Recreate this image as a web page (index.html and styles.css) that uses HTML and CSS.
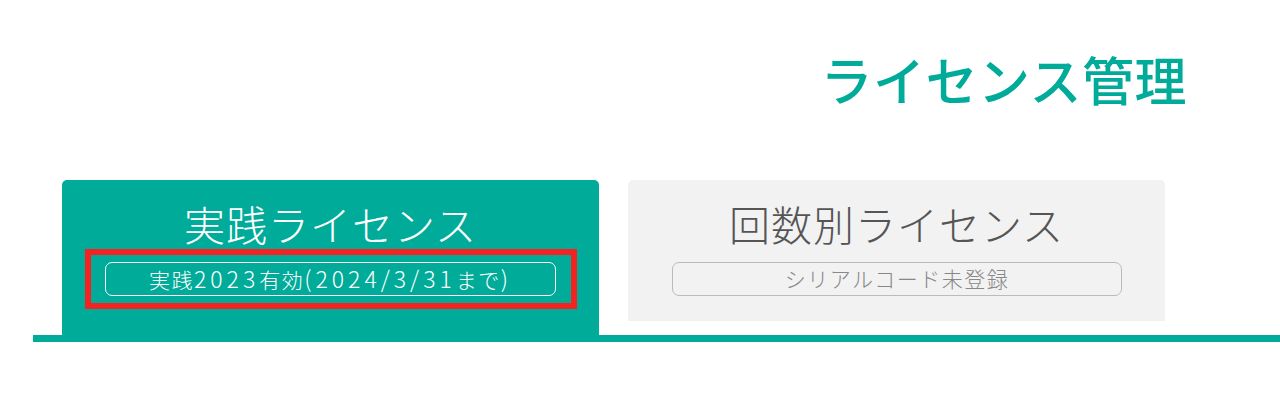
FILE: index.html
```html
<!DOCTYPE html>
<html lang="ja">
<head>
    <meta charset="utf-8">
    <title>ライセンス管理</title>
    <link rel="stylesheet" href="styles.css">
</head>
<body>
    <div class="page">
        <h1 class="page-title">ライセンス管理</h1>
        <div class="tabs">
            <div class="tab tab-active">
                <div class="tab-name">実践ライセンス</div>
                <div class="mark">
                    <div class="status">実践<span class="num">2023</span>有効<span class="num">(2024/3/31</span>まで<span class="num">)</span></div>
                </div>
            </div>
            <div class="tab">
                <div class="tab-name">回数別ライセンス</div>
                <div class="mark-none">
                    <div class="status">シリアルコード未登録</div>
                </div>
            </div>
        </div>
    </div>
</body>
</html>
```

FILE: styles.css
```css
body {
    margin: 0;
    background: #fff;
    font-family: "Noto Sans CJK JP", "Noto Sans", sans-serif;
}
.page {
    padding-left: 33px;
    overflow: hidden;
}
.page-title {
    margin: 0;
    padding: 44px 93px 0 0;
    text-align: right;
    font-size: 52px;
    font-weight: 500;
    line-height: 70px;
    color: #00ab99;
    letter-spacing: 0.5px;
}
.tabs {
    display: flex;
    align-items: flex-start;
    gap: 29px;
    margin-top: 66px;
    padding-left: 29px;
    border-bottom: 7px solid #00ab99;
}
.tab {
    width: 537px;
    height: 141px;
    box-sizing: border-box;
    padding: 18px 0 0;
    background: #f2f2f2;
    border-radius: 5px 5px 0 0;
    color: #555;
    text-align: center;
}
.tab-active {
    height: 155px;
    background: #00ab99;
    color: #fff;
}
.tab-name {
    font-size: 41px;
    font-weight: 300;
    line-height: 50px;
    letter-spacing: 1px;
}
.mark {
    margin: 1px 22px 0 23px;
    padding: 7px 15px 7px 14px;
    border: 6px solid #f52222;
}
.mark-none {
    margin: 14px 43px 0 44px;
}
.status {
    height: 34px;
    box-sizing: border-box;
    border: 1px solid #fff;
    border-radius: 7px;
    font-size: 21px;
    font-weight: 300;
    line-height: 31px;
    letter-spacing: 1.5px;
}
.status .num {
    font-size: 23px;
    letter-spacing: 4px;
}
.mark-none .status {
    border-color: #bbb;
    color: #888;
}
```
